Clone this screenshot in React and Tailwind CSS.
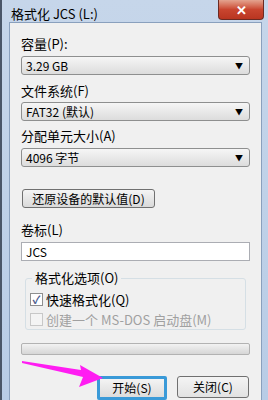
import React from "react";

const font = { fontFamily: '"Noto Sans CJK SC", "Liberation Sans", sans-serif' };

function Select({ value }) {
  return (
    <div className="h-[19px] mx-[11px] flex items-center justify-between rounded-[3px] border border-[#8e8f8f] bg-gradient-to-b from-[#f6f6f6] to-[#dcdcdc] px-[4px] text-[12px] leading-none text-black">
      <span>{value}</span>
      <span className="text-[8px] mr-[2px]">▼</span>
    </div>
  );
}

function Label({ children, className = "" }) {
  return (
    <div className={`px-[11px] text-[13px] leading-none text-black ${className}`}>{children}</div>
  );
}

export default function App() {
  return (
    <div
      className="relative w-[268px] h-[400px] overflow-hidden bg-gradient-to-b from-[#c6d6ea] to-[#b8cce6] flex flex-col border-l-[2px] border-[#4a5668]"
      style={font}
    >
      {/* title bar */}
      <div className="h-[29px] flex items-start justify-between">
        <span className="pl-[9px] pt-[7px] text-[13px] leading-none text-black">格式化 JCS (L:)</span>
        <div className="w-[46px] h-[20px] mr-[4px] rounded-b-[4px] border border-[#6b2a22] border-t-0 bg-gradient-to-b from-[#e3a38f] via-[#c9452f] to-[#b93520] flex items-center justify-center text-white text-[13px] font-bold leading-none">
          ✕
        </div>
      </div>

      {/* content panel */}
      <div className="flex-1 ml-[7px] mr-[6px] border border-[#8aa0bd] border-b-0 bg-[#f0f0f0] flex flex-col pt-[14px]">
        <Label>容量(P):</Label>
        <div className="mt-[6px]"><Select value="3.29 GB" /></div>

        <Label className="mt-[9px]">文件系统(F)</Label>
        <div className="mt-[5px]"><Select value="FAT32 (默认)" /></div>

        <Label className="mt-[8px]">分配单元大小(A)</Label>
        <div className="mt-[6px]"><Select value="4096 字节" /></div>

        <div className="mt-[22px] mx-[12px] w-[133px] h-[19px] rounded-[3px] border border-[#707070] bg-gradient-to-b from-[#f4f4f4] to-[#dadada] flex items-center justify-center text-[12px] leading-none text-black">
          还原设备的默认值(D)
        </div>

        <Label className="mt-[15px]">卷标(L)</Label>
        <div className="mt-[6px] mx-[11px] h-[19px] border border-[#abadb3] bg-white flex items-center px-[4px] text-[12px] leading-none text-black">
          JCS
        </div>

        {/* group box */}
        <div className="relative mt-[17px] mx-[15px] h-[52px] border border-[#d5dfe5] rounded-[3px]">
          <span className="absolute -top-[8px] left-[6px] bg-[#f0f0f0] px-[3px] text-[13px] leading-none text-black">格式化选项(O)</span>
          <div className="flex items-center gap-[3px] pl-[4px] mt-[14px] text-[13px] leading-none text-black">
            <span className="w-[13px] h-[13px] border border-[#8f8f8f] bg-white flex items-center justify-center text-[11px] text-[#4a5a8c] font-bold">✓</span>
            快速格式化(Q)
          </div>
          <div className="flex items-center gap-[3px] pl-[4px] mt-[7px] text-[13px] leading-none text-[#a0a0a0]">
            <span className="w-[13px] h-[13px] border border-[#c8c8c8] bg-[#f4f4f4]"></span>
            创建一个 MS-DOS 启动盘(M)
          </div>
        </div>

        {/* progress */}
        <div className="mt-[13px] mx-[11px] h-[12px] rounded-[2px] border border-[#b2b2b2] bg-gradient-to-b from-[#f2f2f2] to-[#d6d6d6]"></div>

        {/* buttons */}
        <div className="mt-[21px] flex justify-end items-start gap-[10px] pr-[12px]">
          <div className="w-[70px] h-[24px] border-[3px] border-[#3a9ad8] rounded-[2px] bg-gradient-to-b from-[#f4f4f4] to-[#dcdcdc] flex items-center justify-center text-[12px] leading-none text-black">
            开始(S)
          </div>
          <div className="w-[72px] h-[22px] border border-[#707070] rounded-[3px] bg-gradient-to-b from-[#f4f4f4] to-[#e2e2e2] flex items-center justify-center text-[12px] leading-none text-black">
            关闭(C)
          </div>
        </div>
      </div>

      {/* pink arrow overlay */}
      <svg className="absolute left-0 top-0" width="268" height="400" viewBox="0 0 268 400">
        <polygon
          points="20,361 79,370 78,365 101,378 77,387 81,377 20,363"
          fill="#ff1df2"
        />
      </svg>
    </div>
  );
}
